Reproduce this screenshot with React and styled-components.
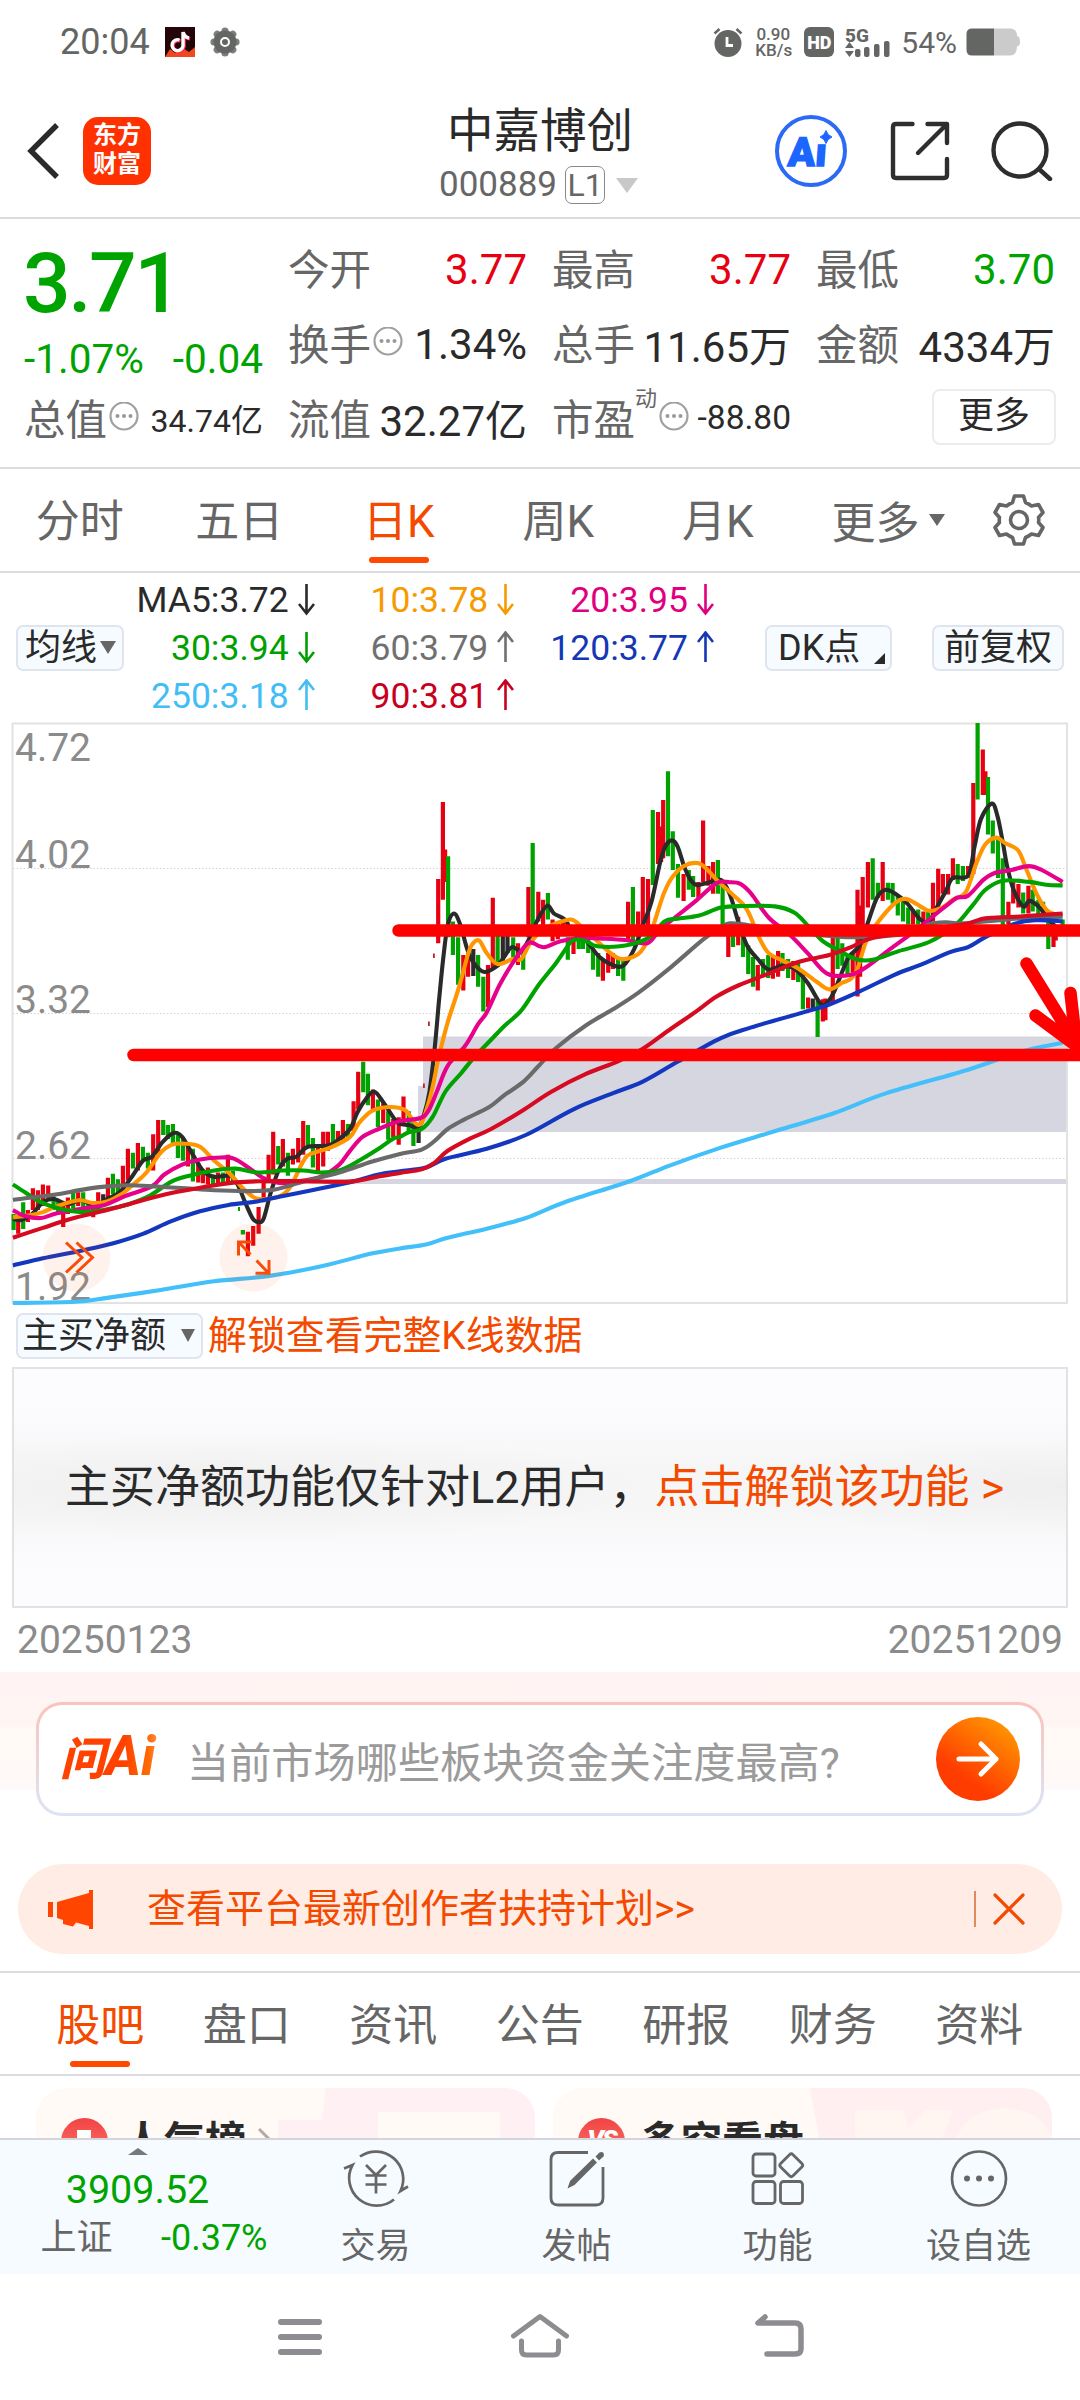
import styled, { createGlobalStyle, css } from "styled-components";

const GlobalStyle = createGlobalStyle`
  * {
    box-sizing: border-box;
  }
  body {
    margin: 0;
    background: #fff;
    font-family: Roboto, "Noto Sans CJK SC", sans-serif;
  }
`;

const UP = "#e60012";
const DOWN = "#00a400";
const ORANGE = "#ff4800";
const ORANGE_TEXT = "#f44a00";
const GREY = "#666";
const DARK = "#2a2a2a";

const Screen = styled.div`
  width: 1080px;
  height: 2400px;
  display: flex;
  flex-direction: column;
  overflow: hidden;
  background: #fff;
`;

/* ---------- status bar ---------- */
const StatusBar = styled.div`
  height: 84px;
  flex: none;
  padding: 0 60px;
  display: flex;
  align-items: center;
  gap: 15px;
  color: #646664;
`;
const Clock = styled.span`
  font-size: 36px;
  line-height: 40px;
  width: 90px;
`;
const StatusRight = styled.div`
  margin-left: auto;
  display: flex;
  align-items: center;
`;
const NetSpeed = styled.div`
  font-size: 17px;
  font-weight: 500;
  line-height: 16px;
  width: 36px;
  margin: 0 13px 0 12px;
  text-align: center;
  white-space: nowrap;
`;
const HdBadge = styled.span`
  width: 30px;
  height: 30px;
  margin-right: 11px;
  border-radius: 6px;
  background: #646664;
  color: #fff;
  font-size: 18px;
  font-weight: 900;
  line-height: 31px;
  text-align: center;
`;
const BatteryText = styled.span`
  font-size: 30px;
  margin: 0 9px 0 10px;
`;

/* ---------- header ---------- */
const Header = styled.div`
  height: 135px;
  flex: none;
  border-bottom: 2px solid #dcdcdc;
  display: grid;
  grid-template-columns: 1fr 260px 1fr;
`;
const HeaderSide = styled.div`
  display: flex;
  align-items: center;
  padding: ${(props) => (props.$right ? "0 27px 0 0" : "0 0 0 27px")};
  justify-content: ${(props) => (props.$right ? "flex-end" : "flex-start")};
  gap: ${(props) => (props.$right ? 41 : 24)}px;
`;
const AppLogo = styled.div`
  width: 68px;
  height: 68px;
  border-radius: 15px;
  background: #ff3100;
  color: #fff;
  font-size: 24px;
  font-weight: 700;
  line-height: 29px;
  padding-top: 4px;
  text-align: center;
`;
const TitleBox = styled.div`
  display: flex;
  flex-direction: column;
  align-items: center;
  padding-top: 18px;
`;
const StockName = styled.div`
  font-size: 46.5px;
  line-height: 58px;
  color: ${DARK};
`;
const StockCode = styled.div`
  display: flex;
  align-items: center;
  margin-top: 6px;
  margin-left: -3px;
  font-size: 35px;
  line-height: 38px;
  color: ${GREY};
`;
const Level = styled.span`
  width: 40px;
  height: 38px;
  margin-left: 8px;
  border: 1.5px solid #888;
  border-radius: 7px;
  font-size: 32px;
  line-height: 36px;
  text-align: center;
`;
const Triangle = styled.i`
  width: 0;
  height: 0;
  border-left: ${(props) => props.$w / 2}px solid transparent;
  border-right: ${(props) => props.$w / 2}px solid transparent;
  ${(props) =>
    props.$up
      ? css`
          border-bottom: ${props.$h}px solid ${props.$color || GREY};
        `
      : css`
          border-top: ${props.$h}px solid ${props.$color || GREY};
        `}
  margin-left: ${(props) => props.$gap || 0}px;
`;

/* ---------- quote ---------- */
const Quote = styled.div`
  height: 250px;
  flex: none;
  padding: 11px 26px 0 25px;
  border-bottom: 2px solid #dcdcdc;
  display: grid;
  grid-template-columns: repeat(4, 238px);
  grid-template-rows: 76px 74px 75px;
  column-gap: 26px;
`;
const PriceBox = styled.div`
  grid-row: span 2;
  color: ${DOWN};
`;
const Price = styled.div`
  height: 106px;
  padding-top: 5px;
  font-size: 84px;
  font-weight: 500;
  line-height: 98px;
  letter-spacing: -2.5px;
  margin-left: -2px;
`;
const Change = styled.div`
  display: flex;
  justify-content: space-between;
  margin-left: -1px;
  font-size: 40.5px;
  line-height: 46px;
`;
const Field = styled.div`
  display: flex;
  align-items: center;
  white-space: nowrap;
`;
const FieldLabel = styled.span`
  margin: -2px 0 0 -1px;
  font-size: 41.500px;
  color: ${GREY};
`;
const FieldSup = styled.sup`
  font-size: 22px;
  color: ${GREY};
  align-self: flex-start;
  margin-top: 7px;
  line-height: 24px;
`;
const FieldValue = styled.span`
  margin-left: auto;
  padding-top: ${(props) => (props.$cjk ? 0 : 3)}px;
  font-size: ${(props) => props.$size || 42}px;
  color: ${(props) => props.$color || DARK};
`;
const MoreButton = styled.div`
  width: 124px;
  height: 56px;
  margin: 9px -1px 0 auto;
  border: 2px solid #ececec;
  border-radius: 8px;
  font-size: 36px;
  line-height: 50px;
  text-align: center;
  color: ${DARK};
`;

/* ---------- tabs ---------- */
const PeriodTabs = styled.div`
  height: 104px;
  flex: none;
  display: flex;
  align-items: center;
  border-bottom: 2px solid #dcdcdc;
`;
const NewsTabs = styled(PeriodTabs)`
  height: 105px;
  padding: 0 27px;
  border-top: 2px solid #dcdcdc;
`;
const Tab = styled.div`
  height: 100%;
  width: ${(props) => props.$width}px;
  flex: none;
  display: flex;
  flex-direction: column;
  align-items: center;
  font-size: 44px;
  line-height: 64px;
  padding-top: 21px;
  color: ${(props) => (props.$active ? ORANGE_TEXT : GREY)};
  &::after {
    content: "";
    width: 60px;
    height: 6px;
    margin-top: 3px;
    border-radius: 3px;
    background: ${(props) => (props.$active ? ORANGE : "transparent")};
  }
`;
const MoreTab = styled.div`
  display: flex;
  align-items: center;
  width: 161px;
  margin-left: 34px;
  font-size: 44px;
  color: ${GREY};
`;

/* ---------- chart ---------- */
const Legend = styled.div`
  height: 147px;
  flex: none;
  display: flex;
  align-items: center;
  padding: 2px 16px 0 16px;
`;
const Averages = styled.div`
  width: 600px;
  margin-left: -9px;
  display: grid;
  grid-template-columns: repeat(3, 1fr);
  grid-auto-rows: 48px;
`;
const Average = styled.div`
  display: flex;
  align-items: center;
  justify-content: flex-end;
  gap: 9px;
  font-size: 35.500px;
  color: ${(props) => props.$color};
`;
const Chip = styled.div`
  width: ${(props) => props.$width}px;
  height: 46px;
  margin-left: ${(props) => props.$gap || 0}px;
  padding: 0 6px;
  padding-left: ${(props) => props.$inset || 7}px;
  display: flex;
  align-items: center;
  justify-content: space-between;
  flex: none;
  border: 2px solid #e0e4ec;
  border-radius: 7px;
  background: #f6fbff;
  font-size: 36px;
  line-height: 42px;
  white-space: nowrap;
  color: ${DARK};
`;
const Corner = styled.i`
  width: 0;
  height: 0;
  align-self: flex-end;
  margin: 0 -1px 5px 0;
  border-left: 11px solid transparent;
  border-bottom: 11px solid ${DARK};
`;
const ChartSvg = styled.svg`
  display: block;
  flex: none;
`;
const SubBar = styled.div`
  height: 59px;
  flex: none;
  display: flex;
  align-items: center;
  padding: 0 0 4px 16px;
`;
const UnlockText = styled.span`
  margin-left: 5px;
  font-size: 38.9px;
  line-height: 46px;
  color: ${ORANGE_TEXT};
`;
const Locked = styled.div`
  height: 241px;
  flex: none;
  margin: 0 12px;
  border: 2px solid #e2e2e6;
  background: radial-gradient(
      ellipse 430px 52px at 20% 50%,
      #efefef 0%,
      rgba(242, 242, 242, 0) 100%
    ),
    radial-gradient(
      ellipse 330px 48px at 100% 50%,
      #efefef 0%,
      rgba(242, 242, 242, 0) 100%
    ),
    linear-gradient(#fcfcfe 15%, #f6f6f7 42%, #f6f6f7 58%, #fcfcfe 85%);
  display: flex;
  align-items: center;
  padding: 0 0 9px 51px;
  font-size: 45px;
  white-space: pre;
  color: ${DARK};
`;
const LockedLink = styled.span`
  color: ${ORANGE_TEXT};
`;
const Dates = styled.div`
  height: 64px;
  flex: none;
  padding: 0 17px;
  display: flex;
  align-items: center;
  justify-content: space-between;
  font-size: 39px;
  color: #8b8b8b;
`;

/* ---------- ask ai + notice ---------- */
const AskArea = styled.div`
  height: 192px;
  flex: none;
  padding: 30px 36px 0;
  background: linear-gradient(
    #fff4f3 0,
    #fff5f3 54px,
    #fffaf5 56px,
    #fff8f8 116px,
    #fff 119px
  );
`;
const AskCard = styled.div`
  height: 114px;
  padding: 0 21px;
  display: flex;
  align-items: center;
  border: 3px solid transparent;
  border-radius: 26px;
  background: linear-gradient(#fff, #fff) padding-box,
    linear-gradient(#fbc3ba, #dbe4f6) border-box;
`;
const AskLogo = styled.div`
  width: 127px;
  padding-bottom: 3px;
  font-size: 55px;
  font-weight: 800;
  font-style: italic;
  line-height: 66px;
  background: linear-gradient(90deg, #ff4200 50%, #ff6a00 70%, #ff9060 78%);
  background-clip: text;
  color: transparent;
  white-space: nowrap;
`;
const AskLogoWord = styled.span`
  font-size: 45px;
  font-weight: 900;
`;
const AskHint = styled.div`
  flex: 1;
  font-size: 42.200px;
  color: #9b9b9b;
`;
const AskButton = styled.div`
  width: 84px;
  height: 84px;
  border-radius: 50%;
  display: flex;
  align-items: center;
  justify-content: center;
  background: linear-gradient(35deg, #ff3c00 30%, #ff9800 90%);
`;
const Notice = styled.div`
  height: 90px;
  flex: none;
  margin: 0 18px 17px;
  padding: 0 37px 0 29px;
  display: flex;
  align-items: center;
  border-radius: 45px;
  background: #ffece4;
`;
const NoticeText = styled.div`
  flex: 1;
  margin-left: 53px;
  font-size: 39px;
  line-height: 50px;
  color: ${ORANGE_TEXT};
`;
const NoticeDivider = styled.i`
  width: 2px;
  height: 36px;
  margin-right: 17px;
  background: #e08a60;
`;

/* ---------- cards ---------- */
const Cards = styled.div`
  height: 62px;
  flex: none;
  overflow: hidden;
  padding: 12px 27px 0 36px;
  display: flex;
  gap: 18px;
`;
const Card = styled.div`
  width: 499px;
  height: 130px;
  flex: none;
  padding: 30px 25px 0;
  display: flex;
  align-items: flex-start;
  position: relative;
  overflow: hidden;
  border-radius: 30px;
  background: #fffaf6;
`;
const CardArt = styled.svg`
  position: absolute;
  top: 0;
  left: 0;
`;
const CardIcon = styled.div`
  width: 47px;
  height: 47px;
  border-radius: 50%;
  background: linear-gradient(#f04444, #ff7a70);
  color: #fff;
  font-size: 26px;
  font-weight: 900;
  font-style: italic;
  line-height: 42px;
  text-align: center;
  letter-spacing: -2px;
  & > svg {
    display: block;
    margin: 12px 0 0 16px;
  }
`;
const CardTitle = styled.div`
  margin: 0 12px 0 15px;
  font-size: 41px;
  line-height: 48px;
  font-weight: 700;
  color: ${DARK};
`;

/* ---------- bottom ---------- */
const BottomBar = styled.div`
  height: 136px;
  flex: none;
  display: flex;
  border-top: 2px solid #d3d4de;
  background: #f6fbff;
`;
const IndexBox = styled.div`
  width: 275px;
  padding-top: 8px;
  display: flex;
  flex-direction: column;
  align-items: center;
  color: ${DOWN};
`;
const IndexValue = styled.div`
  margin-top: 12px;
  font-size: 39.500px;
  line-height: 46px;
`;
const IndexRow = styled.div`
  width: 227px;
  margin-left: 33px;
  display: flex;
  justify-content: space-between;
  font-size: 36px;
  line-height: 51px;
`;
const IndexName = styled.span`
  color: ${GREY};
`;
const Action = styled.div`
  width: 201px;
  padding-top: 8px;
  display: flex;
  flex-direction: column;
  align-items: center;
  font-size: 35px;
  line-height: 50px;
  color: ${GREY};
  & > svg {
    margin-bottom: 12px;
  }
`;
const NavBar = styled.div`
  height: 126px;
  flex: none;
  display: flex;
  align-items: center;
  justify-content: center;
  gap: 177px;
  padding-bottom: 3px;
`;

/* Curve points are kept per pane: the early pane and the zoomed late one. */
const early = ([x, y]) => [x / 2.8, 700 + y / 2.529];
const late = ([x, y]) => [400 + x / 2.306, 700 + y / 2.529];

const pairs = (text) =>
  text.split(" ").map((item) => item.split(",").map(Number));

const smooth = (points) => {
  let d = `M${points[0][0].toFixed(1)} ${points[0][1].toFixed(1)}`;
  for (let i = 0; i < points.length - 1; i++) {
    const p0 = points[i - 1] || points[i];
    const p1 = points[i];
    const p2 = points[i + 1];
    const p3 = points[i + 2] || p2;
    const c = [
      p1[0] + (p2[0] - p0[0]) / 6,
      p1[1] + (p2[1] - p0[1]) / 6,
      p2[0] - (p3[0] - p1[0]) / 6,
      p2[1] - (p3[1] - p1[1]) / 6,
      p2[0],
      p2[1],
    ].map((n) => n.toFixed(1));
    d += `C${c.join(" ")}`;
  }
  return d;
};

const curves = [
  {
    color: "#43c0fa",
    a: "36,1525 210,1522 300,1512 450,1492 600,1470 750,1457 900,1432 1040,1400",
    b: "0,1387 60,1377 110,1360 200,1337 290,1310 380,1270 530,1217 620,1178 740,1132 860,1092 1000,1045 1120,995 1310,935 1430,890 1528,867",
  },
  {
    color: "#2a2a2a",
    a: "36,1312 60,1315 90,1300 120,1270 150,1262 190,1275 225,1265 265,1278 300,1262 335,1245 370,1205 400,1165 425,1155 455,1118 487,1095 510,1105 540,1150 570,1192 600,1206 645,1203 665,1225 690,1278 708,1312 723,1320 738,1312 760,1240 785,1180 805,1160 830,1155 862,1130 920,1127 950,1110 980,1085 1000,1045 1020,1015 1047,990 1075,1020 1105,1060",
    b: "0,1072 20,1075 43,1080 55,1050 68,990 80,880 90,760 100,650 110,570 124,540 138,565 155,630 170,665 195,688 225,672 240,650 258,625 280,635 295,610 320,550 340,520 355,540 380,555 400,590 430,610 460,650 490,670 515,672 540,630 560,570 580,510 600,410 612,370 627,355 640,370 655,420 670,455 685,468 710,462 740,455 760,490 780,560 800,620 825,655 850,682 880,672 910,680 940,715 970,768 985,765 1000,740 1015,700 1035,650 1060,620 1080,560 1100,500 1120,480 1145,492 1170,515 1200,555 1220,560 1240,520 1258,485 1275,450 1310,444 1325,370 1340,300 1365,262 1378,295 1390,360 1400,420 1415,480 1437,522 1452,508 1475,525 1500,560 1528,590",
  },
  {
    color: "#ff9500",
    a: "36,1308 80,1304 120,1295 160,1280 220,1265 260,1272 300,1268 340,1250 380,1220 410,1195 450,1145 480,1125 520,1122 560,1130 600,1165 640,1195 680,1235 715,1260 750,1262 790,1252 815,1228 850,1165 870,1148 930,1130 980,1105 1005,1070 1040,1040 1080,1030",
    b: "0,1032 15,1040 35,1070 48,1072 60,1040 75,980 90,900 110,815 135,730 155,650 165,620 182,608 200,640 225,668 260,655 280,655 300,615 330,580 360,565 395,555 420,575 450,605 480,635 510,655 550,642 575,600 590,550 610,485 630,445 655,420 680,412 700,420 735,460 770,495 800,530 830,605 850,640 880,658 920,680 960,712 990,732 1020,715 1040,705 1055,680 1075,610 1100,565 1140,515 1165,503 1190,515 1220,533 1250,525 1275,505 1305,485 1330,410 1350,365 1375,348 1395,362 1425,380 1445,430 1470,495 1495,535 1528,545",
  },
  {
    color: "#e6008a",
    a: "36,1290 70,1305 115,1310 160,1298 240,1285 290,1278 350,1255 425,1230 460,1200 510,1175 560,1162 620,1157 655,1160 700,1185 740,1210 790,1222 850,1215 900,1205 950,1175 980,1140 1015,1105 1060,1085",
    b: "0,1065 45,1058 65,1040 85,990 110,925 150,875 180,820 200,790 230,720 260,665 295,615 320,622 335,625 370,610 420,602 460,603 520,607 570,615 600,580 640,545 680,510 730,463 760,461 785,465 810,490 850,550 900,595 940,640 985,692 1040,695 1080,672 1130,630 1180,590 1220,555 1260,520 1285,500 1310,495 1345,455 1370,438 1410,430 1450,420 1480,430 1528,460",
  },
  {
    color: "#00a200",
    a: "36,1225 70,1245 110,1268 160,1285 230,1295 300,1288 360,1275 420,1253 480,1218 530,1203 600,1190 660,1185 720,1195 790,1190 850,1190 900,1195 950,1190 1000,1168 1060,1135 1100,1110",
    b: "0,1105 20,1093 50,1085 75,1055 105,990 140,945 170,905 205,865 240,825 280,785 320,720 360,665 385,625 400,607 430,610 455,623 520,621 575,600 610,560 640,553 690,545 740,525 790,521 865,522 910,538 940,570 975,610 1010,632 1050,655 1090,657 1150,635 1220,612 1280,570 1320,520 1350,480 1390,457 1450,460 1490,467 1528,469",
  },
  {
    color: "#6a6a6a",
    a: "36,1264 100,1257 160,1250 240,1237 300,1230 360,1227 430,1230 520,1235 600,1240 700,1242 770,1238 850,1218 950,1195 1040,1168",
    b: "0,1148 50,1137 80,1115 110,1085 150,1060 205,1030 240,1000 285,965 320,925 360,880 430,822 490,783 550,740 620,680 700,605 740,575 760,565 790,567 900,585 1040,600 1180,590 1220,567 1260,562 1300,565 1420,553 1528,548",
  },
  {
    color: "#1437c0",
    a: "36,1430 120,1412 230,1392 320,1373 400,1350 480,1318 560,1293 640,1277 720,1268 800,1253 900,1235 1000,1215 1060,1200",
    b: "0,1192 60,1182 105,1160 200,1135 290,1100 400,1035 490,995 560,965 640,915 740,855 810,828 930,790 990,770 1060,737 1140,695 1200,670 1270,637 1310,625 1350,600 1420,565 1470,557 1528,560",
  },
  {
    color: "#d60a20",
    a: "36,1360 120,1335 200,1312 300,1290 380,1270 480,1247 570,1232 660,1220 740,1217 850,1217 980,1218 1060,1205",
    b: "0,1196 50,1187 80,1170 110,1140 160,1110 210,1085 280,1040 350,990 430,945 500,915 560,882 620,835 680,790 730,750 780,722 850,692 920,662 990,645 1040,625 1080,605 1150,590 1300,567 1350,552 1420,548 1528,540",
  },
];

/* x,high,low of each bar, grouped by colour */
const bars = [
  {
    color: UP,
    a: "51,1305,1350 78,1290,1320 92,1235,1290 106,1240,1290 120,1225,1280 135,1228,1260 177,1270,1333 190,1258,1300 219,1245,1280 261,1270,1308 275,1245,1290 302,1208,1265 344,1178,1240 358,1135,1215 386,1120,1190 429,1098,1190 443,1062,1150 526,1125,1180 555,1170,1220 568,1190,1222 582,1182,1225 610,1195,1225 638,1150,1225 694,1345,1407 709,1330,1380 724,1282,1350 738,1215,1270 752,1150,1220 765,1092,1200 792,1110,1180 820,1135,1175 835,1108,1170 849,1065,1150 890,1130,1195 905,1092,1180 918,1092,1140 946,1090,1125 960,1062,1115 990,1015,1090 1003,940,1035 1044,985,1035 1073,1020,1070 1101,1060,1105",
    b: "-3,1055,1125 8,1003,1070 88,453,615 99,258,505 104,378,460 146,645,735 157,640,700 203,670,777 214,500,680 272,615,670 296,473,600 319,485,560 330,505,570 352,555,610 364,560,605 376,555,590 400,600,642 468,660,710 480,640,690 491,640,680 526,510,610 549,535,600 560,448,590 572,453,575 595,283,415 602,320,410 607,253,400 654,440,508 688,460,500 699,305,460 711,420,470 722,410,490 757,580,650 780,548,620 825,670,735 860,650,705 872,635,700 907,660,708 941,752,780 975,757,813 981,755,810 998,590,765 1044,640,690 1055,480,750 1061,520,700 1067,448,620 1079,410,525 1113,410,508 1183,530,568 1207,535,570 1229,462,560 1241,427,535 1252,440,490 1264,440,492 1275,400,455 1310,420,450 1322,210,440 1344,125,240 1350,180,240 1403,510,568 1414,460,515 1426,465,525 1449,470,540 1507,570,625 1512,575,608",
  },
  {
    color: "#00a200",
    a: "38,1300,1340 65,1270,1338 150,1255,1290 163,1265,1295 205,1240,1285 233,1245,1285 247,1275,1300 316,1198,1250 330,1212,1255 372,1145,1185 400,1130,1165 414,1145,1185 457,1062,1100 470,1075,1110 484,1072,1120 498,1100,1158 512,1110,1165 540,1135,1218 596,1200,1225 624,1195,1225 652,1190,1220 680,1340,1352 779,1128,1175 806,1145,1203 862,1075,1130 876,1108,1182 932,1072,1130 974,1072,1110 1017,915,992 1030,945,1025 1058,1010,1080 1087,1040,1112",
    b: "20,1040,1095 31,1060,1128 111,395,600 122,560,645 134,600,720 180,645,725 192,700,788 225,590,675 261,600,650 284,630,682 306,362,575 341,488,555 387,600,657 412,590,630 422,590,630 434,600,640 445,630,682 457,640,700 503,650,698 515,650,710 537,473,610 583,278,468 618,180,395 629,332,430 641,415,500 666,430,480 676,445,498 733,405,490 744,460,570 768,580,625 791,590,650 803,620,693 814,650,725 837,655,700 849,645,703 882,640,685 895,655,703 918,665,713 929,690,782 963,760,852 1009,570,680 1020,615,672 1032,650,695 1090,400,505 1102,462,500 1125,462,505 1136,463,515 1148,495,545 1160,505,560 1172,525,568 1195,530,568 1218,530,565 1286,415,465 1298,420,458 1332,58,252 1356,195,340 1367,305,388 1379,350,450 1390,400,570 1437,487,540 1459,480,535 1472,505,545 1483,510,550 1495,555,630 1528,555,570",
  },
  {
    color: "#2a2a2a",
    a: "289,1250,1280",
    b: "43,1085,1120 169,630,698 237,595,660 248,590,640 952,755,785",
  },
];

const barPath = (text, toPage) =>
  pairs(text)
    .map(([x, high, low]) => {
      const [px, top] = toPage([x, high]);
      const bottom = toPage([x, low])[1];
      return `M${px.toFixed(1)} ${top.toFixed(1)}V${bottom.toFixed(1)}`;
    })
    .join("");

const prices = [
  ["4.72", 760.5],
  ["4.02", 868],
  ["3.32", 1013],
  ["2.62", 1158.5],
  ["1.92", 1299.5],
];

const Chart = () => (
  <ChartSvg width="1080" height="588" viewBox="0 720 1080 588">
    <rect x="423" y="1036.5" width="644" height="95.5" fill="#d5d6df" />
    <rect x="418" y="1086" width="5" height="46" fill="#d5d6df" />
    <rect x="262" y="1179" width="805" height="5" fill="#d5d6df" />
    <g stroke="#d4d4d4" strokeWidth="1.2" strokeDasharray="1.5 2">
      <path d="M13 868.5H1067M13 1013.5H1067M13 1158.5H1067" />
    </g>
    <rect
      x="12.5"
      y="723.5"
      width="1054.5"
      height="579.5"
      fill="none"
      stroke="#e2e2e2"
      strokeWidth="2"
    />
    {prices.map(([price, y]) => (
      <text key={price} x="15" y={y} fontSize="39" fill="#8b8b8b">
        {price}
      </text>
    ))}
    {bars.map((group) => (
      <path
        key={group.color}
        d={barPath(group.a, early) + barPath(group.b, late)}
        stroke={group.color}
        strokeWidth="4.2"
      />
    ))}
    <g fill="#c8202c">
      <rect x="423" y="1083.5" width="1.8" height="4.5" />
      <rect x="428" y="1021.5" width="1.8" height="4.5" />
      <rect x="433" y="953.5" width="1.8" height="4.5" />
    </g>
    <rect x="238" y="1207" width="2" height="4" fill="#00a200" />
    {curves.map((curve) => (
      <path
        key={curve.color}
        d={smooth([
          ...pairs(curve.a).map(early),
          ...pairs(curve.b).map(late),
        ])}
        fill="none"
        stroke={curve.color}
        strokeWidth="4.1"
      />
    ))}
    <circle cx="76.5" cy="1257.5" r="34" fill="#ff4800" fillOpacity="0.08" />
    <circle cx="253.5" cy="1257.5" r="34" fill="#ff4800" fillOpacity="0.08" />
    <g fill="none" stroke="#f84c08" strokeWidth="3">
      <path d="M66 1242.5L82 1257.5L66 1272.5M76.5 1242.5L92.5 1257.5L76.5 1272.5" />
      <path d="M238.5 1255.5V1242H252M238.5 1242L250.5 1254.5M256.5 1260.5L268.5 1273M269 1260V1273.2H255.5" />
    </g>
    <g
      fill="none"
      stroke="#ff0000"
      strokeWidth="12.5"
      strokeLinecap="round"
      strokeLinejoin="round"
    >
      <path d="M398.5 930.5H1090M133.5 1055H1090" />
      <path d="M1026.5 963.5L1080 1050M1035.5 1015.5L1082 1050M1070.5 993L1077 1050" />
    </g>
  </ChartSvg>
);

const BackIcon = () => (
  <svg width="32" height="56" fill="none" stroke={DARK} strokeWidth="5.4">
    <path d="M30 2L4 28L30 54" />
  </svg>
);

const AiIcon = () => (
  <svg width="76" height="76" viewBox="0 0 76 76">
    <circle cx="38" cy="38" r="34" fill="none" stroke="#2a6af5" strokeWidth="4" />
    <text
      x="14"
      y="53"
      fontSize="40"
      fontWeight="900"
      fill="#1a66ff"
      stroke="#1a66ff"
      strokeWidth="1.4"
      transform="skewX(-4) translate(4 0)"
    >
      Aı
    </text>
    <path
      d="M53 17.5Q54.500 22.5 59 24Q54.500 25.5 53 30.5Q51.500 25.5 47 24Q51.500 22.5 53 17.5Z"
      fill="#1a66ff"
      stroke="#1a66ff"
    />
  </svg>
);

const ShareIcon = () => (
  <svg width="60" height="60" fill="none" stroke="#2e2e2e" strokeWidth="4.4" strokeLinecap="round" strokeLinejoin="round">
    <path d="M22.5 3H6Q3 3 3 6V54Q3 57 6 57H54Q57 57 57 54V38" />
    <path d="M37.5 3H57V22M56 4L28 32" />
  </svg>
);

const SearchIcon = () => (
  <svg width="62" height="60" fill="none" stroke="#2e2e2e" strokeWidth="4.4" strokeLinecap="round">
    <circle cx="29" cy="29" r="26.5" />
    <path d="M48 48L59 58" />
  </svg>
);

const TikTokIcon = () => (
  <svg width="30" height="30">
    <rect width="30" height="30" fill="#240608" />
    <path d="M0 30L5 22L10 26L16 20L24 25L30 20V30Z" fill="#f0481c" />
    <g fill="none" strokeWidth="3.4">
      <path
        d="M14.5 13A5.5 5.5 0 1 0 18 19V5Q19 10 24 11"
        stroke="#fe2c55"
        transform="translate(1 .8)"
      />
      <path d="M14.5 13A5.5 5.5 0 1 0 18 19V5Q19 10 24 11" stroke="#fff" />
    </g>
  </svg>
);

const StatusGear = () => (
  <svg width="30" height="30" viewBox="0 0 30 30" fill="#646664">
    {[0, 45, 90, 135, 180, 225, 270, 315].map((angle) => (
      <circle
        key={angle}
        cx="15"
        cy="4"
        r="3.6"
        fill="#7c7e7c"
        transform={`rotate(${angle} 15 15)`}
      />
    ))}
    <circle cx="15" cy="15" r="11.5" />
    <circle cx="15" cy="15" r="4" fill="none" stroke="#fff" strokeWidth="2" />
  </svg>
);

const AlarmIcon = () => (
  <svg width="30" height="30" viewBox="0 0 30 30">
    <circle cx="15" cy="16.5" r="13.5" fill="#646664" />
    <path d="M1.5 6.5L6.5 2M28.5 6.5L23.5 2" stroke="#646664" strokeWidth="2.5" />
    <path d="M14 10V18.5H20" fill="none" stroke="#fff" strokeWidth="2.8" />
  </svg>
);

const SignalIcon = () => (
  <svg width="46" height="36" viewBox="0 -3 46 36" fill="#646664" overflow="visible">
    <text x="0" y="14.5" fontSize="19" fontWeight="800">
      5G
    </text>
    <path d="M0 21L4.5 15L9 21ZM0 24L4.5 30L9 24Z" />
    <rect x="10" y="22" width="5.5" height="8" rx="2" />
    <rect x="19" y="20" width="5.5" height="10" rx="2" />
    <rect x="29" y="17" width="5.5" height="13" rx="2" />
    <rect x="39" y="14" width="5.5" height="16" rx="2" />
  </svg>
);

const BatteryIcon = () => (
  <svg width="54" height="28" viewBox="0 0 54 28">
    <path
      d="M28 .5H44Q51 .5 51 8Q54 8.5 54 14Q54 18 51 18.5Q51 27.5 44 27.5H28Z"
      fill="#cbcbcb"
    />
    <path d="M28 .5V27.5H6Q.5 27.5 .5 22V6Q.5 .5 6 .5Z" fill="#646664" />
  </svg>
);

const InfoIcon = () => (
  <svg width="32" height="32" viewBox="0 0 32 32">
    <circle cx="17" cy="14" r="13.5" fill="none" stroke="#a0a0a0" strokeWidth="2.2" />
    <g fill="#999">
      <circle cx="10.5" cy="14" r="2" />
      <circle cx="17" cy="14" r="2" />
      <circle cx="23.5" cy="14" r="2" />
    </g>
  </svg>
);

const GearIcon = () => (
  <svg
    width="52"
    height="54"
    viewBox="0 0 52 54"
    fill="none"
    stroke={GREY}
    strokeWidth="3.6"
    strokeLinejoin="round"
  >
    <path d="M21.5 3H30.5L32.5 9.5Q36 11 38.5 13L45.5 11.5L50 19.5L45.5 24.5Q46 27 45.5 29.5L50 34.5L45.5 42.5L38.5 41Q36 43 32.5 44.5L30.5 51H21.5L19.5 44.5Q16 43 13.5 41L6.5 42.5L2 34.5L6.5 29.5Q6 27 6.5 24.5L2 19.5L6.5 11.5L13.5 13Q16 11 19.5 9.5Z" />
    <circle cx="26" cy="27" r="8.5" />
  </svg>
);

const Arrow = ({ up }) => (
  <svg
    width="17"
    height="34"
    viewBox="0 0 17 34"
    fill="none"
    stroke="currentColor"
    strokeWidth="2.6"
  >
    <path
      d="M8.5 1V31M1 21L8.5 30.5L16 21"
      transform={up ? "rotate(180 8.5 16)" : undefined}
    />
  </svg>
);

const HornIcon = () => (
  <svg width="47" height="42" viewBox="0 0 47 42" fill="#ff4500">
    <rect x="1" y="14" width="5" height="15" />
    <path d="M10 14L42 5V2H46V41H42V38L29 34.5L26 38.5L16 36V32L10 30Z" />
  </svg>
);

const CloseIcon = () => (
  <svg width="32" height="32" fill="none" stroke={ORANGE_TEXT} strokeWidth="3.2" strokeLinecap="round">
    <path d="M2 2L30 30M30 2L2 30" />
  </svg>
);

const TradeIcon = () => (
  <svg width="66" height="62" viewBox="0 0 66 62" fill="none" stroke={GREY} strokeWidth="2.7">
    <path d="M17 8.5A27.5 27.5 0 0 1 57.5 43L65 38.5" />
    <path d="M51 51.5A27.5 27.5 0 0 1 9.5 17L1 20.5" />
    <path d="M23 17L33 27L43 17M22.5 27.5H43.5M22.5 36.5H43.5M33 27V45.5" />
  </svg>
);

const PostIcon = () => (
  <svg width="56" height="62" viewBox="0 0 56 62" fill="none" stroke={GREY} strokeWidth="2.8">
    <path d="M39 4.5H9Q2 4.5 2 11.5V50Q2 57 9 57H47Q54 57 54 50V19" />
    <g fill={GREY} stroke="none">
      <path d="M18.5 40.5L21 33L44 10.5L48 14.5L25.5 37Z" />
      <path d="M46.5 8.5L50.5 4.5Q53 3.5 54.5 5Q55.5 7 54.5 8.5L50 12.5Z" />
    </g>
  </svg>
);

const GridIcon = () => (
  <svg width="56" height="62" viewBox="0 0 56 62" fill="none" stroke={GREY} strokeWidth="2.8">
    <rect x="3" y="6" width="22" height="22" rx="3" />
    <rect x="3" y="33.5" width="22" height="22" rx="3" />
    <rect x="30.5" y="33.5" width="22" height="22" rx="3" />
    <rect
      x="32.5"
      y="8.5"
      width="17.5"
      height="17.5"
      rx="2.5"
      transform="rotate(45 41.25 17.25)"
    />
  </svg>
);

const DotsIcon = () => (
  <svg width="58" height="62" viewBox="0 0 58 62">
    <circle cx="29" cy="30.500" r="27" fill="none" stroke={GREY} strokeWidth="2.7" />
    <g fill={GREY}>
      <circle cx="17" cy="30.500" r="3" />
      <circle cx="29" cy="30.500" r="3" />
      <circle cx="41" cy="30.500" r="3" />
    </g>
  </svg>
);

const averages = [
  ["MA5:3.72", DARK, false],
  ["10:3.78", "#f79a00", false],
  ["20:3.95", "#e0007f", false],
  ["30:3.94", "#00a000", false],
  ["60:3.79", "#707070", true],
  ["120:3.77", "#1437b4", true],
  ["250:3.18", "#43bdf5", true],
  ["90:3.81", "#c8001e", true],
];

const periods = ["分时", "五日", "日K", "周K", "月K"];
const sections = ["股吧", "盘口", "资讯", "公告", "研报", "财务", "资料"];
const actions = [
  ["交易", TradeIcon],
  ["发帖", PostIcon],
  ["功能", GridIcon],
  ["设自选", DotsIcon],
];

const App = () => {
  return (
    <Screen>
      <GlobalStyle />
      <StatusBar>
        <Clock>20:04</Clock>
        <TikTokIcon />
        <StatusGear />
        <StatusRight>
          <AlarmIcon />
          <NetSpeed>
            0.90
            <br />
            KB/s
          </NetSpeed>
          <HdBadge>HD</HdBadge>
          <SignalIcon />
          <BatteryText>54%</BatteryText>
          <BatteryIcon />
        </StatusRight>
      </StatusBar>

      <Header>
        <HeaderSide>
          <BackIcon />
          <AppLogo>
            东方
            <br />
            财富
          </AppLogo>
        </HeaderSide>
        <TitleBox>
          <StockName>中嘉博创</StockName>
          <StockCode>
            000889
            <Level>L1</Level>
            <Triangle $w={22} $h={15} $gap={11} $color="#c8c8c8" />
          </StockCode>
        </TitleBox>
        <HeaderSide $right>
          <AiIcon />
          <ShareIcon />
          <SearchIcon />
        </HeaderSide>
      </Header>

      <Quote>
        <PriceBox>
          <Price>3.71</Price>
          <Change>
            <span>-1.07%</span>
            <span>-0.04</span>
          </Change>
        </PriceBox>
        <Field>
          <FieldLabel>今开</FieldLabel>
          <FieldValue $color={UP}>3.77</FieldValue>
        </Field>
        <Field>
          <FieldLabel>最高</FieldLabel>
          <FieldValue $color={UP}>3.77</FieldValue>
        </Field>
        <Field>
          <FieldLabel>最低</FieldLabel>
          <FieldValue $color={DOWN}>3.70</FieldValue>
        </Field>
        <Field>
          <FieldLabel>换手</FieldLabel>
          <InfoIcon />
          <FieldValue>1.34%</FieldValue>
        </Field>
        <Field>
          <FieldLabel>总手</FieldLabel>
          <FieldValue $cjk>11.65万</FieldValue>
        </Field>
        <Field>
          <FieldLabel>金额</FieldLabel>
          <FieldValue $cjk>4334万</FieldValue>
        </Field>
        <Field>
          <FieldLabel>总值</FieldLabel>
          <InfoIcon />
          <FieldValue $cjk $size={32}>
            34.74亿
          </FieldValue>
        </Field>
        <Field>
          <FieldLabel>流值</FieldLabel>
          <FieldValue $cjk>32.27亿</FieldValue>
        </Field>
        <Field>
          <FieldLabel>市盈</FieldLabel>
          <FieldSup>动</FieldSup>
          <InfoIcon />
          <FieldValue $cjk $size={33.5}>
            -88.80
          </FieldValue>
        </Field>
        <MoreButton>更多</MoreButton>
      </Quote>

      <PeriodTabs>
        {periods.map((name) => (
          <Tab key={name} $width={159.5} $active={name === "日K"}>
            {name}
          </Tab>
        ))}
        <MoreTab>
          更多
          <Triangle $w={16} $h={12} $gap={9} />
        </MoreTab>
        <GearIcon />
      </PeriodTabs>

      <Legend>
        <Chip $width={108}>
          均线
          <Triangle $w={16} $h={13} />
        </Chip>
        <Averages>
          {averages.map(([label, color, up]) => (
            <Average key={label} $color={color}>
              {label}
              <Arrow up={up} />
            </Average>
          ))}
        </Averages>
        <Chip $width={127} $gap={51} $inset={11}>
          <span>DK点</span>
          <Corner />
        </Chip>
        <Chip $width={132} $gap={40} $inset={10}>
          前复权
        </Chip>
      </Legend>
      <Chart />
      <SubBar>
        <Chip $width={187} $inset={4}>
          主买净额
          <Triangle $w={15} $h={13} />
        </Chip>
        <UnlockText>解锁查看完整K线数据</UnlockText>
      </SubBar>
      <Locked>
        主买净额功能仅针对L2用户，
        <LockedLink>{"点击解锁该功能 >"}</LockedLink>
      </Locked>
      <Dates>
        <span>20250123</span>
        <span>20251209</span>
      </Dates>

      <AskArea>
        <AskCard>
          <AskLogo>
            <AskLogoWord>问</AskLogoWord>Ai
          </AskLogo>
          <AskHint>当前市场哪些板块资金关注度最高?</AskHint>
          <AskButton>
            <svg
              width="44"
              height="40"
              fill="none"
              stroke="#fff"
              strokeWidth="5"
              strokeLinecap="round"
              strokeLinejoin="round"
            >
              <path d="M3 20H40M25 5L40 20L25 35" />
            </svg>
          </AskButton>
        </AskCard>
      </AskArea>
      <Notice>
        <HornIcon />
        <NoticeText>{"查看平台最新创作者扶持计划>>"}</NoticeText>
        <NoticeDivider />
        <CloseIcon />
      </Notice>

      <NewsTabs>
        {sections.map((name) => (
          <Tab key={name} $width={146.5} $active={name === "股吧"}>
            {name}
          </Tab>
        ))}
      </NewsTabs>
      <Cards>
        <Card>
          <CardArt width="499" height="60">
            <path d="M290 0H499V60H464V24H342V60H242V32H286Z" fill="#fff1f3" />
          </CardArt>
          <CardIcon>
            <svg width="14" height="26">
              <rect width="14" height="26" fill="#fff" />
            </svg>
          </CardIcon>
          <CardTitle>人气榜</CardTitle>
          <svg width="14" height="40" fill="none" stroke="#b5aaa8" strokeWidth="3">
            <path d="M1 11L11 21L1 31" />
          </svg>
        </Card>
        <Card>
          <CardArt width="499" height="60">
            <path d="M257 0H499V60H268Z" fill="#ffeff1" />
            <path
              d="M302 22H350L355 40L372 22H400L385 60H302ZM400 60Q410 22 450 20Q490 22 499 50V60Z"
              fill="#fff6f2"
            />
          </CardArt>
          <CardIcon>VS</CardIcon>
          <CardTitle>多空看盘</CardTitle>
        </Card>
      </Cards>

      <BottomBar>
        <IndexBox>
          <Triangle $up $w={20} $h={7} $color="#77787e" />
          <IndexValue>3909.52</IndexValue>
          <IndexRow>
            <IndexName>上证</IndexName>
            <span>-0.37%</span>
          </IndexRow>
        </IndexBox>
        {actions.map(([name, Icon]) => (
          <Action key={name}>
            <Icon />
            {name}
          </Action>
        ))}
      </BottomBar>
      <NavBar>
        <svg
          width="66"
          height="46"
          viewBox="0 0 66 46"
          stroke="#8e8c90"
          strokeWidth="6"
          strokeLinecap="round"
        >
          <path d="M14 9H52M14 24H52M14 39H52" />
        </svg>
        <svg
          width="60"
          height="46"
          viewBox="0 0 60 46"
          fill="none"
          stroke="#8e8c90"
          strokeWidth="5"
          strokeLinecap="round"
          strokeLinejoin="round"
        >
          <path d="M3.5 23L30 3.5L56.5 23M11.5 28V37Q11.5 42 16.5 42H43.5Q48.5 42 48.5 37V28" />
        </svg>
        <svg
          width="66"
          height="46"
          viewBox="0 0 66 46"
          fill="none"
          stroke="#8e8c90"
          strokeWidth="5.5"
          strokeLinecap="round"
          strokeLinejoin="round"
        >
          <path d="M18 4L11 10H48Q54 10 54 16V36Q54 41 48 41H20" />
        </svg>
      </NavBar>
    </Screen>
  );
};

export default App;
